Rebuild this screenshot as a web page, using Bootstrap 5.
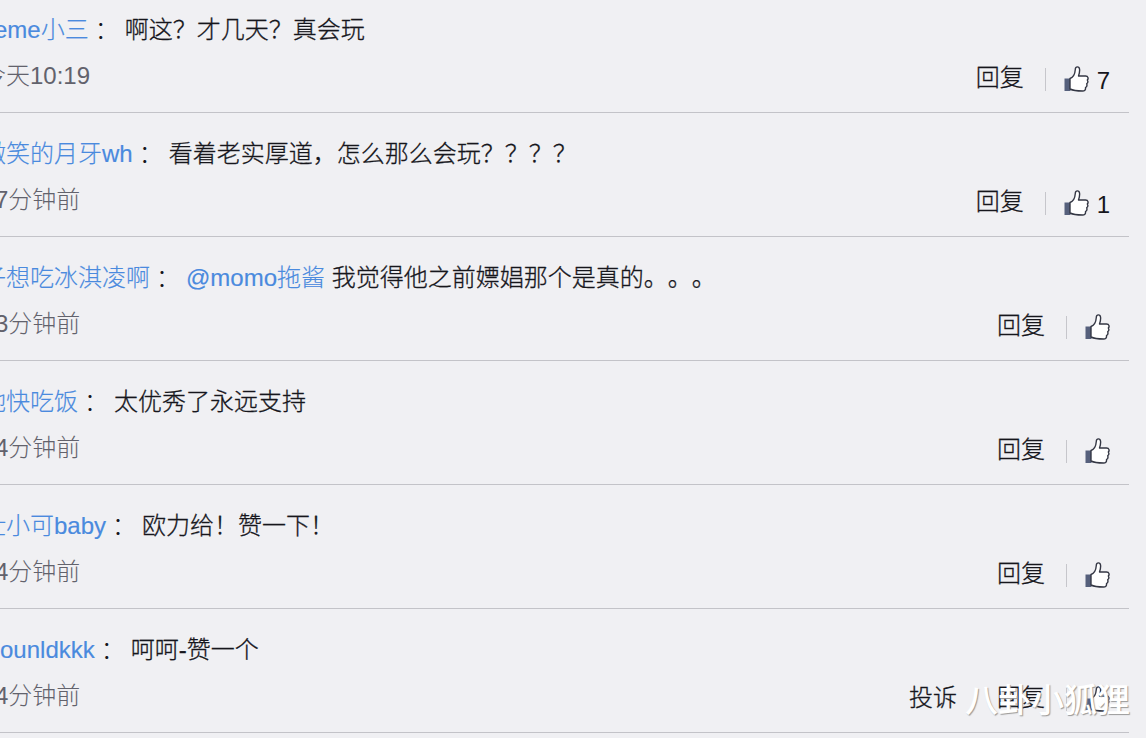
<!DOCTYPE html>
<html lang="zh-CN">
<head>
  <meta charset="UTF-8">
  <title>评论</title>
  <meta name="viewport" content="width=device-width, initial-scale=1">
  <link href="https://cdn.jsdelivr.net/npm/bootstrap@5.3.0/dist/css/bootstrap.min.css" rel="stylesheet">
  <style>
    body {
      background: #f0f0f3;
      color: #16161c;
      font-family: "Liberation Sans", "Noto Sans CJK SC", sans-serif;
      font-weight: 300;
      font-size: 24px;
      line-height: 36px;
      font-kerning: none;
      text-spacing-trim: space-all;
      height: 738px;
    }
    .comments { width: 1129px; margin-top: -11px; }
    .comment {
      height: 124px;
      padding-top: 23px;
      border-bottom: 1px solid #c3c3c8;
    }
    .author, .mention { color: #4a8ade; }
    .author, .message, .label { -webkit-text-stroke: .3px currentColor; }
    .author, .mention { -webkit-text-stroke-width: .15px; }
    .colon {
      width: 36px;
      font-family: "Noto Sans CJK TC", sans-serif;
      font-weight: 300;
    }
    .time { color: #62626c; margin-top: 10px; margin-left: -5px; }
    .actions { margin-right: 19px; margin-top: 12px; }
    .sep { width: 1px; height: 23px; background: #c6c6cb; margin: 2px 18px 0 21px; }
    .thumb { width: 25px; height: 28px; margin-top: 2px; }
    .count { margin-left: 8px; margin-top: 6px; line-height: 30px; }
    .report { margin-right: 40px; }
    /* names run past the left edge */
    .cut-6 { margin-left: -6px; }
    .cut-18 { margin-left: -18px; }
    .watermark {
      right: 16px;
      bottom: 17px;
      color: #fff;
      font-size: 33px;
      line-height: 40px;
      font-weight: 500;
      text-shadow: 1px 1px 1px #999;
    }
  </style>
</head>
<body class="overflow-hidden position-relative">

<svg class="d-none">
  <symbol id="thumb" viewBox="0 0 25 28">
    <path d="M0.500 13.500h6v12.500H0.500z" fill="#56607c"/>
    <path d="M6 13.500C9 12.500 11 8.500 11.300 4.500C11.300 1 15.300 1 15.600 4.500C15.800 7 15.200 9 14.500 11H21.500C24.500 11 24.500 14 23.300 15C24.200 16.500 23.800 18 22.700 18.800C23.300 20.500 22.800 21.800 21.500 22.500C21.800 25 20.500 26 18.500 26C13.500 26 10 26 6 24Z" fill="#fff" stroke="#343744" stroke-width="1.400" stroke-linejoin="round"/>
  </symbol>
</svg>

<div class="comments d-flex flex-column">
  <div class="comment">
    <div class="d-flex text-nowrap"><span class="author cut-6">eme小三</span><span class="colon">：</span><span class="message">啊这？才几天？真会玩</span></div>
    <div class="d-flex justify-content-between">
      <div class="time cut-18">今天10:19</div>
      <div class="actions d-flex align-items-center"><span class="label">回复</span><i class="sep"></i><svg class="thumb"><use href="#thumb"/></svg><span class="count">7</span></div>
    </div>
  </div>
  <div class="comment">
    <div class="d-flex text-nowrap"><span class="author cut-18">微笑的月牙wh</span><span class="colon">：</span><span class="message">看着老实厚道，怎么那么会玩？？？？</span></div>
    <div class="d-flex justify-content-between">
      <div class="time">7分钟前</div>
      <div class="actions d-flex align-items-center"><span class="label">回复</span><i class="sep"></i><svg class="thumb"><use href="#thumb"/></svg><span class="count">1</span></div>
    </div>
  </div>
  <div class="comment">
    <div class="d-flex text-nowrap"><span class="author cut-18">子想吃冰淇凌啊</span><span class="colon">：</span><span class="message"><span class="mention">@momo拖酱</span> 我觉得他之前嫖娼那个是真的。。。</span></div>
    <div class="d-flex justify-content-between">
      <div class="time">3分钟前</div>
      <div class="actions d-flex align-items-center"><span class="label">回复</span><i class="sep"></i><svg class="thumb"><use href="#thumb"/></svg></div>
    </div>
  </div>
  <div class="comment">
    <div class="d-flex text-nowrap"><span class="author cut-18">她快吃饭</span><span class="colon">：</span><span class="message">太优秀了永远支持</span></div>
    <div class="d-flex justify-content-between">
      <div class="time">4分钟前</div>
      <div class="actions d-flex align-items-center"><span class="label">回复</span><i class="sep"></i><svg class="thumb"><use href="#thumb"/></svg></div>
    </div>
  </div>
  <div class="comment">
    <div class="d-flex text-nowrap"><span class="author cut-18">仕小可baby</span><span class="colon">：</span><span class="message">欧力给！赞一下！</span></div>
    <div class="d-flex justify-content-between">
      <div class="time">4分钟前</div>
      <div class="actions d-flex align-items-center"><span class="label">回复</span><i class="sep"></i><svg class="thumb"><use href="#thumb"/></svg></div>
    </div>
  </div>
  <div class="comment">
    <div class="d-flex text-nowrap"><span class="author">ounldkkk</span><span class="colon">：</span><span class="message">呵呵-赞一个</span></div>
    <div class="d-flex justify-content-between">
      <div class="time">4分钟前</div>
      <div class="actions d-flex align-items-center"><span class="label report">投诉</span><span class="label">回复</span><i class="sep"></i><svg class="thumb"><use href="#thumb"/></svg></div>
    </div>
  </div>
</div>

<div class="watermark position-absolute text-nowrap">八卦小狐狸</div>

<script src="https://cdn.jsdelivr.net/npm/bootstrap@5.3.0/dist/js/bootstrap.bundle.min.js"></script>
</body>
</html>
